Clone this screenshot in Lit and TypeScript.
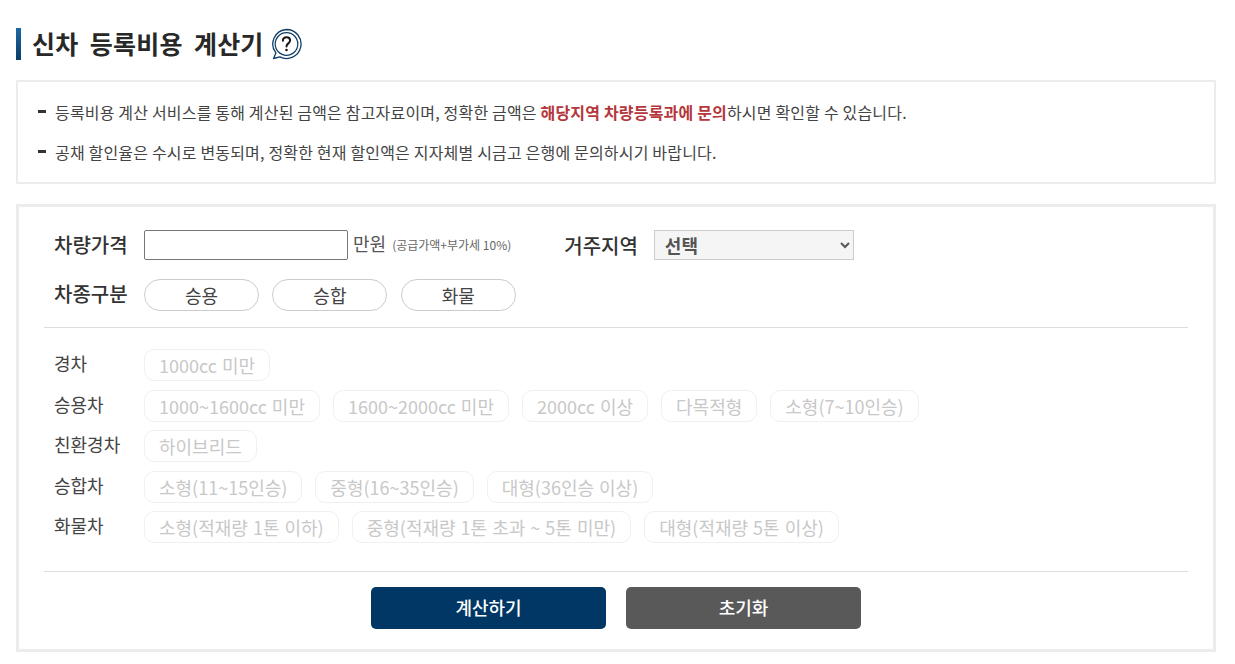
import { LitElement, html, css } from 'lit';
import { customElement } from 'lit/decorators.js';

const GROUPS: { label: string; items: string[] }[] = [
  { label: '경차', items: ['1000cc 미만'] },
  { label: '승용차', items: ['1000~1600cc 미만', '1600~2000cc 미만', '2000cc 이상', '다목적형', '소형(7~10인승)'] },
  { label: '친환경차', items: ['하이브리드'] },
  { label: '승합차', items: ['소형(11~15인승)', '중형(16~35인승)', '대형(36인승 이상)'] },
  { label: '화물차', items: ['소형(적재량 1톤 이하)', '중형(적재량 1톤 초과 ~ 5톤 미만)', '대형(적재량 5톤 이상)'] },
];

@customElement('app-root')
export class AppRoot extends LitElement {
  static styles = css`
    :host {
      display: block;
      height: 664px;
      overflow: hidden;
      background: #fff;
      color: #333;
      font-family: 'Noto Sans CJK KR', 'Noto Sans', sans-serif;
    }

    * {
      box-sizing: border-box;
    }

    .page {
      padding: 28px 19px 0 16px;
    }

    /* Title */
    .title {
      display: flex;
      align-items: center;
      height: 32px;
      border-left: 5px solid;
      border-image: linear-gradient(#1f6aa5, #0b3a66) 1;
      padding-left: 11px;
      gap: 6px;
      font-size: 25px;
      font-weight: 700;
      letter-spacing: 0.2px;
      color: #282828;
      word-spacing: 5.5px;
    }

    .title span {
      padding-bottom: 2px;
    }

    .title svg {
      display: block;
    }

    /* Notice box */
    .notice {
      margin-top: 20px;
      height: 104px;
      border: 2px solid #ececec;
      padding: 10px 20px 0;
      font-size: 16px;
      letter-spacing: 0.18px;
    }

    .notice-row {
      display: flex;
      align-items: center;
      height: 40px;
      gap: 9px;
      color: #444;
    }

    .notice-row::before {
      content: '';
      width: 8px;
      height: 3px;
      background: #333;
      margin-top: -2px;
    }

    .notice-row b {
      color: #b5373c;
      font-weight: 700;
    }

    /* Form box */
    .form {
      margin-top: 20px;
      height: 448px;
      border: 3px solid #ececec;
      padding: 0 25px;
    }

    .field-row {
      display: flex;
      align-items: center;
    }

    .price-row {
      height: 30px;
      margin-top: 23px;
    }

    .type-row {
      height: 32px;
      margin-top: 19px;
    }

    .field-label {
      width: 100px;
      padding: 0 0 2px 10px;
      font-size: 20px;
      font-weight: 500;
      color: #333;
      white-space: nowrap;
    }

    .type-row .field-label {
      padding-bottom: 4px;
    }

    .price-input {
      width: 204px;
      height: 30px;
      border: 1px solid #767676;
      border-radius: 2px;
      background: #fff;
    }

    .unit {
      margin-left: 5px;
      padding-bottom: 4px;
      font-size: 18px;
      color: #555;
    }

    .hint {
      margin-left: 6px;
      padding-bottom: 2px;
      font-size: 12px;
      color: #666;
    }

    .region {
      margin-left: 53px;
      font-size: 20px;
      font-weight: 500;
      color: #333;
    }

    .region-select {
      margin-left: 16px;
      width: 200px;
      height: 30px;
      border: 1px solid #ccc;
      background: #f5f5f5;
      padding-left: 6px;
      font-family: inherit;
      font-size: 18px;
      font-weight: 700;
      color: #555;
    }

    .types {
      display: flex;
      gap: 13.4px;
    }

    .type-btn {
      width: 115px;
      height: 32px;
      border: 1px solid #ccc;
      border-radius: 16px;
      background: #fff;
      font-family: inherit;
      font-size: 18px;
      color: #444;
      padding: 0;
    }

    .rule {
      height: 1px;
      background: #ddd;
    }

    .rule-top {
      margin-top: 16px;
    }

    /* Option groups */
    .groups {
      height: 243px;
      padding-top: 21px;
    }

    .group {
      display: flex;
      height: 40.6px;
    }

    .group-label {
      width: 100px;
      padding-left: 10px;
      font-size: 18px;
      line-height: 29px;
      color: #444;
      white-space: nowrap;
    }

    .chips {
      display: flex;
      gap: 13px;
    }

    .chip {
      height: 32px;
      padding: 0 14px;
      border: 1px solid #f0f0f0;
      border-radius: 10px;
      background: #fff;
      font-family: inherit;
      font-size: 18px;
      word-spacing: 1px;
      color: #c8c8c8;
      white-space: nowrap;
    }

    /* Bottom buttons */
    .actions {
      display: flex;
      justify-content: center;
      gap: 20px;
      margin-top: 15px;
    }

    .action {
      width: 235px;
      height: 42px;
      border: none;
      border-radius: 5px;
      padding: 0 0 2px;
      font-family: inherit;
      font-size: 18px;
      font-weight: 500;
      color: #fff;
    }

    .calc {
      background: #003764;
    }

    .reset {
      background: #595959;
    }
  `;

  render() {
    return html`
      <div class="page">
        <div class="title">
          <span>신차 등록비용 계산기</span>
          <svg width="32" height="32" viewBox="0 0 32 32" fill="none">
            <path d="M16.5 1.5a14.5 14.5 0 1 1-6.6 27.4L3.6 30.5l2.3-5.6A14.5 14.5 0 0 1 16.5 1.5z" stroke="#0f3f66" stroke-width="1.3" stroke-linejoin="round"/>
            <circle cx="16.5" cy="16" r="11.3" stroke="#0f3f66" stroke-width="1.2"/>
            <path d="M12.9 12.8c0-2.2 1.6-3.5 3.6-3.5s3.6 1.3 3.6 3.2c0 2.9-3.6 2.9-3.6 5.9" stroke="#1a1a1a" stroke-width="2" stroke-linecap="round"/>
            <circle cx="16.5" cy="22" r="1.3" fill="#1a1a1a"/>
          </svg>
        </div>

        <div class="notice">
          <div class="notice-row">
            <span>등록비용 계산 서비스를 통해 계산된 금액은 참고자료이며, 정확한 금액은 <b>해당지역 차량등록과에 문의</b>하시면 확인할 수 있습니다.</span>
          </div>
          <div class="notice-row">
            <span>공채 할인율은 수시로 변동되며, 정확한 현재 할인액은 지자체별 시금고 은행에 문의하시기 바랍니다.</span>
          </div>
        </div>

        <div class="form">
          <div class="field-row price-row">
            <span class="field-label">차량가격</span>
            <input class="price-input" type="text" />
            <span class="unit">만원</span>
            <span class="hint">(공급가액+부가세 10%)</span>
            <span class="region">거주지역</span>
            <select class="region-select"><option>선택</option></select>
          </div>
          <div class="field-row type-row">
            <span class="field-label">차종구분</span>
            <div class="types">
              <button class="type-btn">승용</button>
              <button class="type-btn">승합</button>
              <button class="type-btn">화물</button>
            </div>
          </div>
          <div class="rule rule-top"></div>
          <div class="groups">
            ${GROUPS.map(
              g => html`
                <div class="group">
                  <span class="group-label">${g.label}</span>
                  <div class="chips">
                    ${g.items.map(item => html`<button class="chip">${item}</button>`)}
                  </div>
                </div>
              `
            )}
          </div>
          <div class="rule"></div>
          <div class="actions">
            <button class="action calc">계산하기</button>
            <button class="action reset">초기화</button>
          </div>
        </div>
      </div>
    `;
  }
}
